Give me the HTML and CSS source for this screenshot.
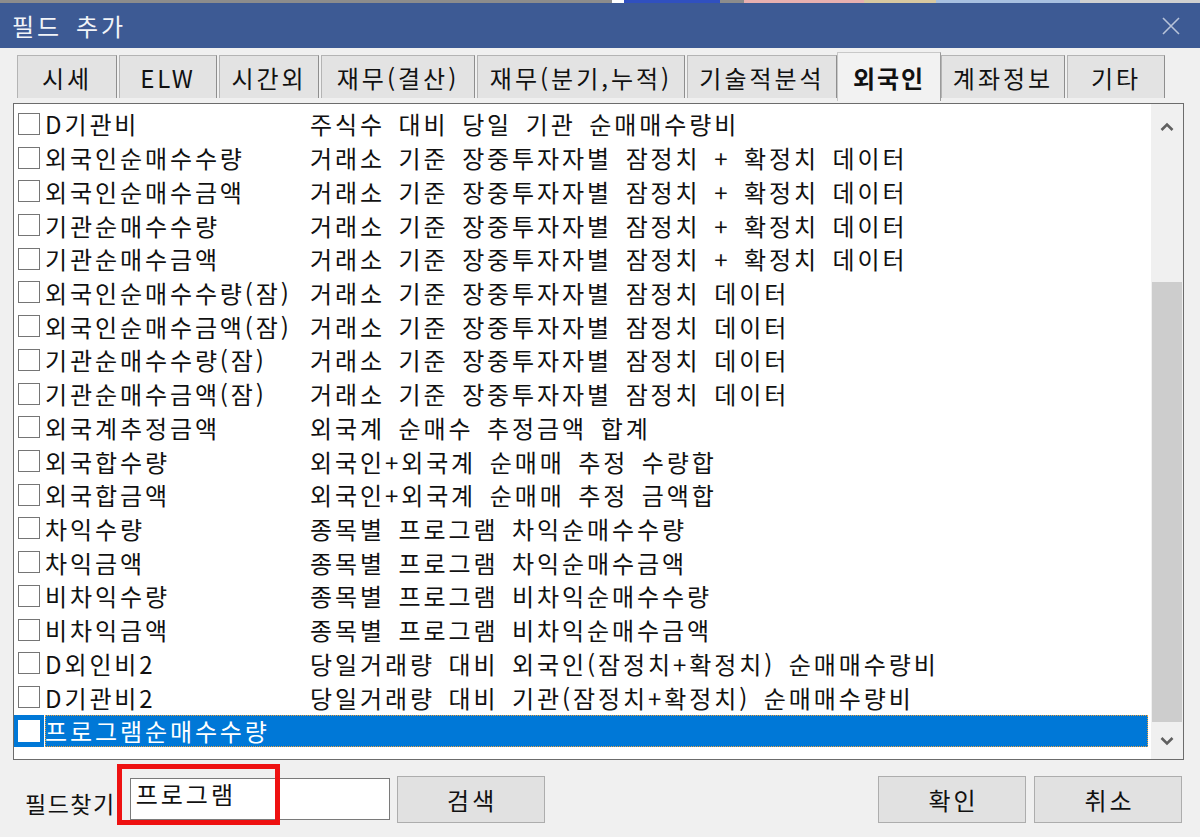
FILE: index.html
```html
<!DOCTYPE html>
<html lang="ko">
<head>
<meta charset="utf-8">
<title>필드 추가</title>
<link rel="stylesheet" href="styles.css">
</head>
<body>
<div class="window">
  <div class="topstrip"></div>
  <div class="titlebar">
    <span class="title">필드 추가</span>
    <svg class="close" width="22" height="22" viewBox="0 0 22 22"><path d="M3 3 L19 19 M19 3 L3 19" stroke="#b8c3d9" stroke-width="1.6" fill="none"/></svg>
  </div>
  <div class="content">
    <div class="tabs">
      <div class="tab">시세</div>
      <div class="tab">ELW</div>
      <div class="tab">시간외</div>
      <div class="tab">재무(결산)</div>
      <div class="tab">재무(분기,누적)</div>
      <div class="tab">기술적분석</div>
      <div class="tab active">외국인</div>
      <div class="tab">계좌정보</div>
      <div class="tab">기타</div>
    </div>
    <div class="listbox">
      <div class="rows">
        <div class="row"><span class="cbcell"><span class="cb"></span></span><span class="label"><span class="name">D기관비</span><span class="desc">주식수 대비 당일 기관 순매매수량비</span></span></div>
        <div class="row"><span class="cbcell"><span class="cb"></span></span><span class="label"><span class="name">외국인순매수수량</span><span class="desc">거래소 기준 장중투자자별 잠정치 + 확정치 데이터</span></span></div>
        <div class="row"><span class="cbcell"><span class="cb"></span></span><span class="label"><span class="name">외국인순매수금액</span><span class="desc">거래소 기준 장중투자자별 잠정치 + 확정치 데이터</span></span></div>
        <div class="row"><span class="cbcell"><span class="cb"></span></span><span class="label"><span class="name">기관순매수수량</span><span class="desc">거래소 기준 장중투자자별 잠정치 + 확정치 데이터</span></span></div>
        <div class="row"><span class="cbcell"><span class="cb"></span></span><span class="label"><span class="name">기관순매수금액</span><span class="desc">거래소 기준 장중투자자별 잠정치 + 확정치 데이터</span></span></div>
        <div class="row"><span class="cbcell"><span class="cb"></span></span><span class="label"><span class="name">외국인순매수수량(잠)</span><span class="desc">거래소 기준 장중투자자별 잠정치 데이터</span></span></div>
        <div class="row"><span class="cbcell"><span class="cb"></span></span><span class="label"><span class="name">외국인순매수금액(잠)</span><span class="desc">거래소 기준 장중투자자별 잠정치 데이터</span></span></div>
        <div class="row"><span class="cbcell"><span class="cb"></span></span><span class="label"><span class="name">기관순매수수량(잠)</span><span class="desc">거래소 기준 장중투자자별 잠정치 데이터</span></span></div>
        <div class="row"><span class="cbcell"><span class="cb"></span></span><span class="label"><span class="name">기관순매수금액(잠)</span><span class="desc">거래소 기준 장중투자자별 잠정치 데이터</span></span></div>
        <div class="row"><span class="cbcell"><span class="cb"></span></span><span class="label"><span class="name">외국계추정금액</span><span class="desc">외국계 순매수 추정금액 합계</span></span></div>
        <div class="row"><span class="cbcell"><span class="cb"></span></span><span class="label"><span class="name">외국합수량</span><span class="desc">외국인+외국계 순매매 추정 수량합</span></span></div>
        <div class="row"><span class="cbcell"><span class="cb"></span></span><span class="label"><span class="name">외국합금액</span><span class="desc">외국인+외국계 순매매 추정 금액합</span></span></div>
        <div class="row"><span class="cbcell"><span class="cb"></span></span><span class="label"><span class="name">차익수량</span><span class="desc">종목별 프로그램 차익순매수수량</span></span></div>
        <div class="row"><span class="cbcell"><span class="cb"></span></span><span class="label"><span class="name">차익금액</span><span class="desc">종목별 프로그램 차익순매수금액</span></span></div>
        <div class="row"><span class="cbcell"><span class="cb"></span></span><span class="label"><span class="name">비차익수량</span><span class="desc">종목별 프로그램 비차익순매수수량</span></span></div>
        <div class="row"><span class="cbcell"><span class="cb"></span></span><span class="label"><span class="name">비차익금액</span><span class="desc">종목별 프로그램 비차익순매수금액</span></span></div>
        <div class="row"><span class="cbcell"><span class="cb"></span></span><span class="label"><span class="name">D외인비2</span><span class="desc">당일거래량 대비 외국인(잠정치+확정치) 순매매수량비</span></span></div>
        <div class="row"><span class="cbcell"><span class="cb"></span></span><span class="label"><span class="name">D기관비2</span><span class="desc">당일거래량 대비 기관(잠정치+확정치) 순매매수량비</span></span></div>
        <div class="row sel"><span class="cbcell"><span class="cb"></span></span><span class="label"><span class="name">프로그램순매수수량</span><span class="desc"></span></span></div>
      </div>
      <div class="scrollbar">
        <div class="arrow up"><svg width="14" height="10" viewBox="0 0 14 10"><path d="M1.5 8 L7 2.5 L12.5 8" stroke="#606060" stroke-width="2.6" fill="none"/></svg></div>
        <div class="track"><div class="thumb"></div></div>
        <div class="arrow down"><svg width="14" height="10" viewBox="0 0 14 10"><path d="M1.5 2 L7 7.5 L12.5 2" stroke="#606060" stroke-width="2.6" fill="none"/></svg></div>
      </div>
    </div>
    <div class="bottom">
      <span class="findlabel">필드찾기</span>
      <div class="inputwrap">
        <div class="input">프로그램</div>
        <div class="highlight"></div>
      </div>
      <button class="btn search">검색</button>
      <div class="spacer"></div>
      <button class="btn">확인</button>
      <button class="btn">취소</button>
    </div>
  </div>
</div>
</body>
</html>
```

FILE: styles.css
```css
html, body {
  margin: 0;
  padding: 0;
  background: #f0f0f0;
  font-family: "Noto Sans CJK KR", "Noto Sans", sans-serif;
  color: #000;
}

.window {
  width: 1200px;
  height: 837px;
  display: flex;
  flex-direction: column;
  overflow: hidden;
  background: #f0f0f0;
}

.topstrip {
  height: 3px;
  background: linear-gradient(90deg, #8c8c8c 0 51%, #ffffff 51% 52%, #3050c0 52% 60%, #8c8c8c 60% 62%, #e8b0b0 62% 72%, #d8c8a0 72% 78%, #a8c0e0 78% 90%, #d0d0d0 90% 100%);
}

.titlebar {
  height: 45px;
  background: #3d5a94;
  color: #f2f4f8;
  display: flex;
  align-items: center;
  justify-content: space-between;
  padding: 0 18px 0 12px;
}

.title {
  font-size: 24px;
  letter-spacing: 3px;
  word-spacing: 4px;
}

.content {
  flex: 1;
  display: flex;
  flex-direction: column;
  padding: 7px 18px 0 13px;
}

.tabs {
  display: grid;
  grid-template-columns: 100px 98px 100px 154px 208px 150px 100px 124px 98px;
  gap: 2px;
  height: 43px;
  margin-left: 4px;
  position: relative;
}

.tab {
  display: flex;
  align-items: center;
  justify-content: center;
  background: #e3e3e3;
  border: 1px solid #b4b4b4;
  border-right-color: #8e8e8e;
  border-bottom: none;
  font-size: 24px;
  letter-spacing: 3px;
  color: #111;
  white-space: pre;
}

.tab.active {
  background: #f2f2f2;
  font-weight: 700;
  letter-spacing: 2px;
  margin: -3px -2px -3px -2px;
  border-color: #c8c8c8;
  border-right-color: #9a9a9a;
  position: relative;
  z-index: 1;
}

.listbox {
  margin-top: 5px;
  height: 657px;
  width: 1171px;
  box-sizing: border-box;
  border: 1px solid #6c6c6c;
  background: #fff;
  display: flex;
}

.rows {
  flex: 1;
  padding-top: 3px;
  display: flex;
  flex-direction: column;
}

.row {
  height: 33.72px;
  display: flex;
  align-items: stretch;
  font-size: 24px;
  letter-spacing: 2.9px;
  word-spacing: 4px;
  white-space: pre;
  color: #111;
}

.cbcell {
  width: 30px;
  display: flex;
  align-items: center;
  padding-left: 4px;
  box-sizing: border-box;
}

.cb {
  width: 22px;
  height: 22px;
  box-sizing: border-box;
  border: 1px solid #757575;
  background: #fff;
}

.label {
  flex: 1;
  display: flex;
  align-items: center;
  margin-right: 3px;
  padding-left: 1px;
  box-sizing: border-box;
}

.name {
  width: 265px;
  flex: none;
}

.row.sel .cbcell {
  background: #0078d7;
  margin-top: 1px;
  margin-bottom: 1px;
}

.row.sel .cb {
  border-color: #fff;
}

.row.sel .label {
  background: #0078d7;
  color: #fff;
  outline: 1px dotted #e8a040;
  outline-offset: -1px;
  margin-left: 1px;
  padding-left: 0;
  margin-top: 1px;
  margin-bottom: 1px;
}

.scrollbar {
  width: 32px;
  background: #f0f0f0;
  display: flex;
  flex-direction: column;
}

.arrow {
  height: 42px;
  display: flex;
  align-items: center;
  justify-content: center;
}

.arrow.up {
  height: 46px;
}

.arrow.down {
  height: 36px;
}

.track {
  flex: 1;
  padding-top: 132px;
  box-sizing: border-box;
}

.thumb {
  margin-left: 1px;
  width: 30px;
  height: 440px;
  background: #cdcdcd;
}

.bottom {
  display: flex;
  align-items: center;
  height: 63px;
  padding-top: 15px;
  box-sizing: border-box;
}

.findlabel {
  font-size: 23px;
  letter-spacing: 1.5px;
  margin-left: 12px;
  margin-top: 8px;
  color: #111;
}

.inputwrap {
  position: relative;
  margin-left: 14px;
}

.input {
  width: 260px;
  height: 42px;
  box-sizing: border-box;
  border: 1px solid #7a7a7a;
  background: #fff;
  font-size: 24px;
  letter-spacing: 3px;
  padding: 0 0 0 5px;
  line-height: 30px;
  color: #111;
}

.highlight {
  position: absolute;
  left: -13px;
  top: -14px;
  width: 163px;
  height: 61px;
  box-sizing: border-box;
  border: 5px solid #ee1111;
}

.btn {
  width: 148px;
  height: 47px;
  box-sizing: border-box;
  background: #e1e1e1;
  border: 1px solid #adadad;
  font-family: "Noto Sans CJK KR", "Noto Sans", sans-serif;
  font-size: 24px;
  letter-spacing: 3px;
  color: #111;
  padding: 0 0 0 3px;
}

.btn.search {
  margin-left: 7px;
}

.spacer {
  flex: 1;
}

.btn + .btn {
  margin-left: 8px;
}
```
